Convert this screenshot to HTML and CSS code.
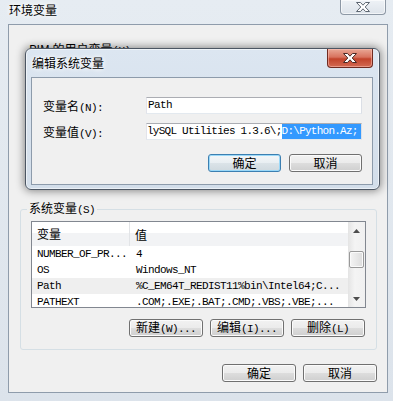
FILE: index.html
```html
<!DOCTYPE html>
<html lang="zh-CN">
<head>
    <meta charset="UTF-8">
    <title>环境变量</title>
    <link rel="stylesheet" href="styles.css">
</head>
<body>
    <div class="window">
        <div class="titlebar">
            <span class="title">环境变量</span>
            <button class="close close-off">
                <svg width="14" height="10" viewBox="0 0 14 10"><polygon points="0.5,0.5 4.5,0.5 7,3.2 9.5,0.5 13.5,0.5 9.2,5 13.5,9.5 9.5,9.5 7,6.8 4.5,9.5 0.5,9.5 4.8,5" fill="#fff" stroke="#5d6671" stroke-width="1"/></svg>
            </button>
        </div>

        <div class="client">
            <div class="user-group">
                <span class="group-label">PIM 的用户变量<span class="a">(U)</span></span>
            </div>

            <fieldset class="group">
                <legend>系统变量<span class="a">(S)</span></legend>
                <div class="listview">
                    <div class="lv-main">
                        <div class="lv-head">
                            <span class="col1">变量</span>
                            <span class="col2">值</span>
                        </div>
                        <div class="lv-row"><span class="col1 a">NUMBER_OF_PR...</span><span class="col2 a">4</span></div>
                        <div class="lv-row"><span class="col1 a">OS</span><span class="col2 a">Windows_NT</span></div>
                        <div class="lv-row hot"><span class="col1 a">Path</span><span class="col2 a">%C_EM64T_REDIST11%bin\Intel64;C...</span></div>
                        <div class="lv-row"><span class="col1 a">PATHEXT</span><span class="col2 a">.COM;.EXE;.BAT;.CMD;.VBS;.VBE;...</span></div>
                    </div>
                    <div class="scrollbar">
                        <div class="sb-btn"><svg width="7" height="4" viewBox="0 0 7 4"><polygon points="3.5,0 7,4 0,4" fill="#4d4d4d"/></svg></div>
                        <div class="sb-thumb"></div>
                        <div class="sb-track"></div>
                        <div class="sb-btn"><svg width="7" height="4" viewBox="0 0 7 4"><polygon points="0,0 7,0 3.5,4" fill="#4d4d4d"/></svg></div>
                    </div>
                </div>
                <div class="btn-row">
                    <button class="btn">新建<span class="a">(W)...</span></button>
                    <button class="btn">编辑<span class="a">(I)...</span></button>
                    <button class="btn">删除<span class="a">(L)</span></button>
                </div>
            </fieldset>

            <div class="btn-row footer">
                <button class="btn">确定</button>
                <button class="btn">取消</button>
            </div>
        </div>

        <!-- 编辑对话框，盖在主窗口上 -->
        <div class="dialog">
            <div class="dlg-titlebar">
                <span class="title">编辑系统变量</span>
                <button class="close close-on">
                    <svg width="14" height="10" viewBox="0 0 14 10"><polygon points="0.5,0.5 4.5,0.5 7,3.2 9.5,0.5 13.5,0.5 9.2,5 13.5,9.5 9.5,9.5 7,6.8 4.5,9.5 0.5,9.5 4.8,5" fill="#fff" stroke="#4a2a26" stroke-width="1"/></svg>
                </button>
            </div>
            <div class="dlg-client">
                <div class="form">
                    <label>变量名<span class="a">(N):</span></label>
                    <div class="field a">Path</div>
                    <label>变量值<span class="a">(V):</span></label>
                    <div class="field long a">lySQL Utilities 1.3.6\;<span class="sel">D:\Python.Az;</span></div>
                </div>
                <div class="btn-row dlg-buttons">
                    <button class="btn default">确定</button>
                    <button class="btn">取消</button>
                </div>
            </div>
        </div>
    </div>
</body>
</html>
```

FILE: styles.css
```css
:root {
    --frame: #e0e7ee;
    --face: #f0f0f0;
    --line: #8f9cab;
}

* {
    box-sizing: border-box;
}

body {
    margin: 0;
    font-family: 'Noto Sans CJK SC', sans-serif;
    font-size: 12px;
    color: #000;
}

/* ascii text, looks like SimSun half-width */
.a {
    font-family: 'Liberation Mono', monospace;
    font-size: 11px;
    letter-spacing: -0.6px;
}

.window {
    position: relative;
    width: 393px;
    height: 401px;
    display: flex;
    flex-direction: column;
    background: linear-gradient(180deg, #e6ecf2, #dce3eb);
    overflow: hidden;
}

.titlebar {
    height: 24px;
    display: flex;
    justify-content: space-between;
    align-items: flex-start;
    padding: 0 7px 0 9px;
}

.title {
    line-height: 20px;
    text-shadow: 0 0 4px #fff, 0 0 6px #fff;
}

.close {
    width: 46px;
    height: 15px;
    border-radius: 0 0 4px 4px;
    padding: 0;
    display: flex;
    align-items: center;
    justify-content: center;
}

.close-off {
    border: 1px solid #8d98a5;
    border-top: none;
    background: linear-gradient(180deg, #eef2f6, #dde3ea);
    box-shadow: inset 0 0 0 1px rgba(255,255,255,0.6);
}

.close-on {
    height: 19px;
    border: 1px solid #6f2a20;
    border-top: none;
    background: linear-gradient(180deg, #e9a896 0%, #d8725e 45%, #c2432b 55%, #d36a52 100%);
    box-shadow: inset 0 0 0 1px rgba(255,200,190,0.5);
}

.client {
    flex: 1;
    margin: 0 5px 8px 8px;
    border: 1px solid var(--line);
    background: var(--face);
    padding: 15px 10px 0 11px;
    display: flex;
    flex-direction: column;
}

.user-group {
    height: 161px;
    padding-left: 9px;
}

.group-label {
    line-height: 14px;
}

.group {
    margin: 0;
    padding: 4px 10px 12px 10px;
    border: 1px solid #d5dfe5;
    border-radius: 3px;
    min-width: 0;
}

.group legend {
    padding: 0 2px;
    margin-left: -4px;
    line-height: 14px;
}

.listview {
    height: 87px;
    border: 1px solid #828790;
    background: #fff;
    display: flex;
}

.lv-main {
    flex: 1;
    overflow: hidden;
}

.lv-head {
    height: 24px;
    display: flex;
    align-items: center;
    background: linear-gradient(180deg, #fff 0%, #fff 44%, #f2f3f5 45%, #f2f3f5 100%);
}

.lv-head .col1 {
    height: 24px;
    line-height: 24px;
    border-right: 1px solid #e2e4e7;
}

.col1 {
    width: 98px;
    padding-left: 5px;
    flex-shrink: 0;
}

.col2 {
    padding-left: 5px;
    white-space: nowrap;
}

.lv-row {
    height: 16px;
    line-height: 16px;
    display: flex;
    white-space: nowrap;
}

.lv-row .col1 {
    width: 98px;
}

.lv-row .col2 {
    padding-left: 6px;
}

.lv-row.hot {
    background: #efefef;
}

.scrollbar {
    width: 17px;
    display: flex;
    flex-direction: column;
    background: linear-gradient(90deg, #e4e4e4, #f4f4f4 40%, #f0f0f0);
}

.sb-btn {
    height: 17px;
    display: flex;
    align-items: center;
    justify-content: center;
}

.sb-thumb {
    height: 17px;
    margin: 12px 1px 0 1px;
    border: 1px solid #999;
    border-radius: 2px;
    background: linear-gradient(90deg, #f4f4f4, #e8e8e8 50%, #dcdcdc);
    box-shadow: inset 0 0 0 1px #fafafa;
}

.sb-track {
    flex: 1;
}

.btn-row {
    display: flex;
    justify-content: flex-end;
    gap: 7px;
    margin-top: 11px;
    padding-right: 1px;
}

.footer {
    margin-top: 14px;
    padding-right: 0;
}

.btn {
    width: 74px;
    height: 18px;
    padding: 0;
    border: 1px solid #707070;
    border-radius: 3px;
    font-family: 'Noto Sans CJK SC', sans-serif;
    font-size: 12px;
    line-height: 14px;
    color: #000;
    background: linear-gradient(180deg, #f2f2f2 0%, #ebebeb 50%, #dddddd 51%, #cfcfcf 100%);
    box-shadow: inset 0 0 0 1px #fbfbfb;
}

.btn.default {
    border-color: #3c7fb1;
    box-shadow: inset 0 0 0 1px #9ad8f8;
    background: linear-gradient(180deg, #f3f6f8 0%, #e8eef2 50%, #dbe3e8 51%, #cfd9df 100%);
}

.dialog {
    position: absolute;
    left: 25px;
    top: 48px;
    width: 355px;
    height: 142px;
    border: 1px solid #4c5663;
    border-radius: 6px;
    background: linear-gradient(180deg, #dce6f1, #d3deea);
    box-shadow: 0 0 8px 1px rgba(0,0,0,0.45), inset 0 0 0 1px rgba(255,255,255,0.55);
    padding: 0 6px 4px 5px;
    display: flex;
    flex-direction: column;
}

.dlg-titlebar {
    height: 28px;
    display: flex;
    justify-content: space-between;
    align-items: flex-start;
    padding-left: 1px;
}

.dlg-titlebar .title {
    line-height: 28px;
}

.dlg-client {
    flex: 1;
    border: 1px solid #8d9bab;
    background: var(--face);
    padding: 19px 10px 0 11px;
}

.form {
    display: grid;
    grid-template-columns: 103px 216px;
    row-gap: 9px;
    align-items: center;
}

.field {
    height: 17px;
    line-height: 15px;
    padding-left: 1px;
    border: 1px solid;
    border-color: #abadb3 #dbdfe6 #e3e9ef #e2e3ea;
    background: #fff;
    white-space: nowrap;
    overflow: hidden;
    display: flex;
}

.field.long {
    padding-left: 0;
    letter-spacing: -0.75px;
}

.sel {
    flex: 1;
    background: #3399ff;
    color: #fff;
}

.dlg-buttons {
    margin-top: 14px;
    gap: 8px;
    padding-right: 0;
}

.dlg-buttons .btn {
    width: 73px;
}
```
